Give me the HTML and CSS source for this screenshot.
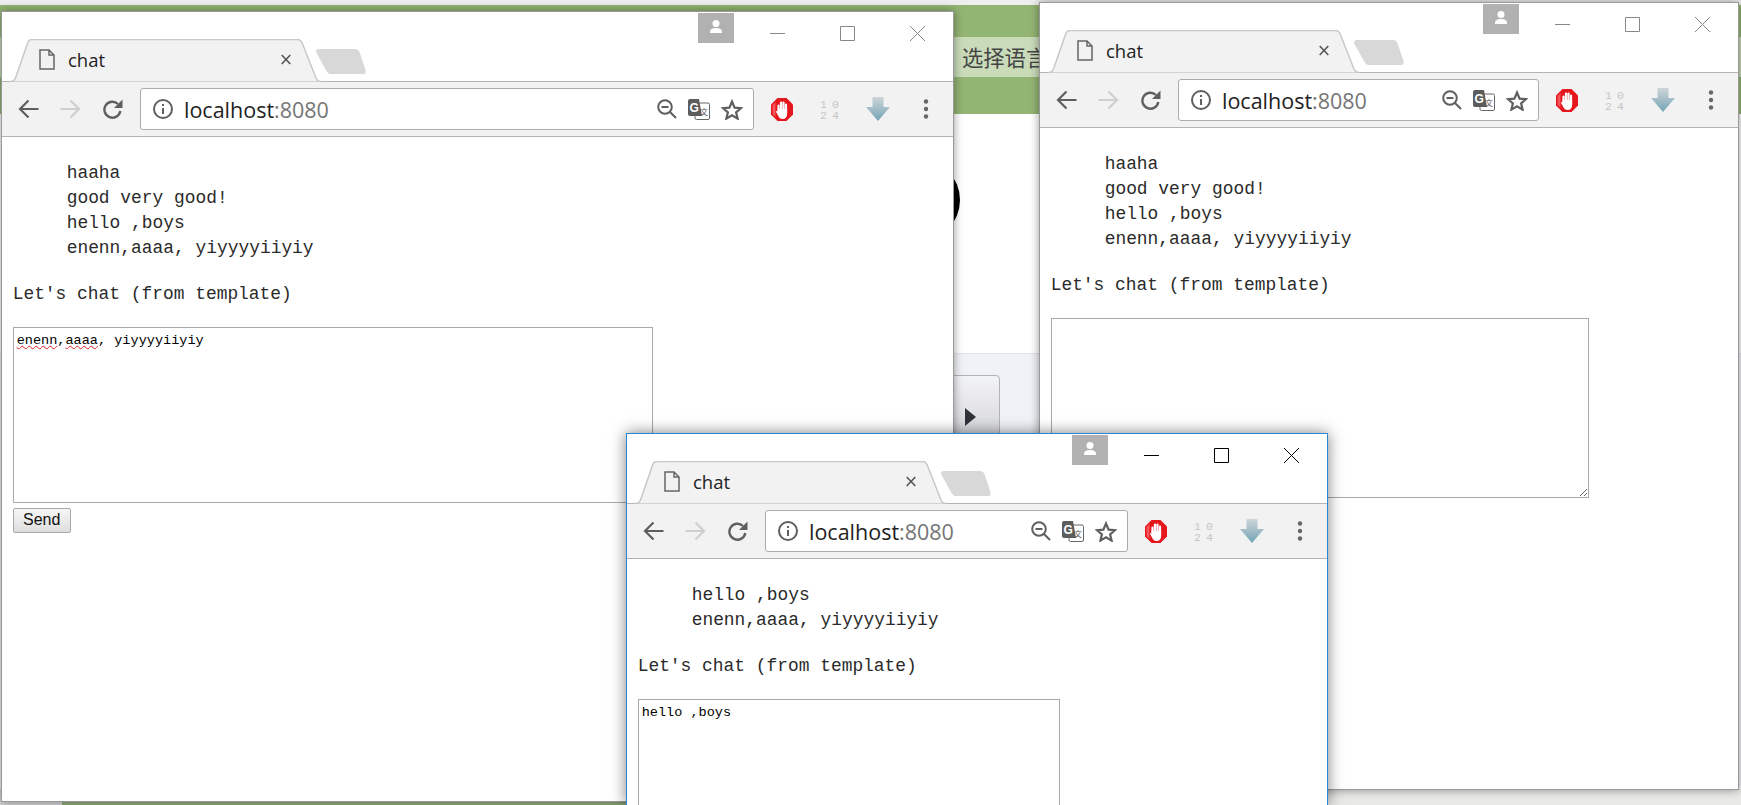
FILE: index.html
```html
<!DOCTYPE html>
<html lang="en">
<head>
  <meta charset="UTF-8" />
  <meta name="viewport" content="width=device-width, initial-scale=1.0" />
  <title>chat</title>
  <link rel="stylesheet" href="styles.css">
</head>
<body>
  <svg class="sprite" aria-hidden="true">
    <defs>
      <linearGradient id="dl-fill" x1="0" y1="0" x2="0" y2="1"><stop offset="0" stop-color="#ced5d8"/><stop offset="1" stop-color="#74a5b6"/></linearGradient>
    </defs>
    <symbol id="i-doc" viewBox="0 0 16 21"><path d="M1 1h9l5 5v14H1z M10 1v5h5" fill="none" stroke="currentColor" stroke-width="1.5"/></symbol>
    <symbol id="i-x" viewBox="0 0 10 11"><path d="M.7 1l8.6 9M9.3 1L.7 10" fill="none" stroke="currentColor" stroke-width="1.6"/></symbol>
    <symbol id="i-newtab" viewBox="0 0 50 25"><path d="M3 0h36q3 0 4.500 3l6 18q1 4-3 4H14q-2 0-3.500-3L.5 4Q-1 0 3 0z" fill="#d8d8d8"/></symbol>
    <symbol id="i-back" viewBox="0 0 21 20"><path d="M20.500 10H2M10.500 1.500L2 10l8.500 8.500" fill="none" stroke="currentColor" stroke-width="2.200"/></symbol>
    <symbol id="i-fwd" viewBox="0 0 21 20"><path d="M.5 10H19M10.500 1.500L19 10l-8.500 8.500" fill="none" stroke="currentColor" stroke-width="2.200"/></symbol>
    <symbol id="i-reload" viewBox="0 0 21 20"><path d="M16 5A8 8 0 1 0 18.300 12" fill="none" stroke="currentColor" stroke-width="2.400"/><path d="M20.500 .5V9h-8.500z" fill="currentColor"/></symbol>
    <symbol id="i-info" viewBox="0 0 20 20"><circle cx="10" cy="10" r="9" fill="none" stroke="currentColor" stroke-width="2"/><path d="M9 9h2v6H9zM9 5h2v2H9z" fill="currentColor"/></symbol>
    <symbol id="i-zoom" viewBox="0 0 20 20"><circle cx="8" cy="8" r="6.800" fill="none" stroke="currentColor" stroke-width="2"/><path d="M4.500 8h7M13 13l6 6" fill="none" stroke="currentColor" stroke-width="2"/></symbol>
    <symbol id="i-translate" viewBox="0 0 22 21">
      <rect x="7" y="4" width="14.500" height="16.500" rx="1.500" fill="#fff" stroke="#666"/>
      <path d="M2 0h9l3 17H2a2 2 0 0 1-2-2V2a2 2 0 0 1 2-2z" fill="#5c5c5c"/>
    </symbol>
    <symbol id="i-star" viewBox="0 0 22 21"><path d="M11 2.500l2.600 6.100 6.400.5-4.900 4.200 1.500 6.300L11 16.300l-5.600 3.300 1.500-6.300L2 9.100l6.400-.5z" fill="none" stroke="currentColor" stroke-width="2.200"/></symbol>
    <symbol id="i-adblock" viewBox="0 0 22 23">
      <path d="M6.500 0h9L22 6.500v10L15.500 23h-9L0 16.500v-10z" fill="#e5161c"/>
      <path d="M1.500 7v9l3 3V4z" fill="#f2555a"/>
      <path d="M7.500 13V7.500M10 12V4.500M12.500 12V4.500M15 13V6.500" stroke="#fff" stroke-width="2.200" stroke-linecap="round"/>
      <path d="M6.400 11h9.800v4q0 6-4.700 6-3 0-4.200-3L4.800 13.500q.8-1 2 .2z" fill="#fff"/>
    </symbol>
    <symbol id="i-download" viewBox="0 0 24 24"><path d="M6.500 0h11v10H24L12 24 0 10h6.500z" fill="url(#dl-fill)"/></symbol>
    <symbol id="i-dots" viewBox="0 0 6 20"><circle cx="3" cy="2.500" r="2.200"/><circle cx="3" cy="10" r="2.200"/><circle cx="3" cy="17.500" r="2.200"/></symbol>
    <symbol id="i-user" viewBox="0 0 36 30"><circle cx="18" cy="10.500" r="3.500" fill="#fff"/><path d="M12 19q0-4 6-4t6 4v1H12z" fill="#fff"/></symbol>
    <symbol id="i-min" viewBox="0 0 15 15"><path d="M0 7.500h15" stroke="currentColor" fill="none"/></symbol>
    <symbol id="i-max" viewBox="0 0 15 15"><path d="M.5.5h14v14H.5z" stroke="currentColor" fill="none"/></symbol>
    <symbol id="i-close" viewBox="0 0 15 15"><path d="M0 0l15 15M15 0L0 15" stroke="currentColor" fill="none"/></symbol>
    <symbol id="i-tab" viewBox="0 0 311 43" preserveAspectRatio="none"><path d="M0 42.500h1q3 0 4.500-3.500L18 3q1-2.500 4-2.500h266q2.500 0 4 3L306 39q1.500 3.500 5 3.500" fill="#f2f2f2" stroke="#c8c8c8" stroke-width="1.500"/></symbol>
  </svg>

  <div class="desktop">
    <!-- the page behind the chat windows -->
    <div class="backdrop">
      <div class="bd-strip"></div>
      <div class="bd-header"><div class="bd-lang">选择语言</div></div>
      <div class="bd-main"><div class="bd-circle"></div></div>
      <div class="bd-panel">
        <div class="bd-button"><span class="bd-play"></span></div>
      </div>
      <div class="bd-footer">
        <div class="bd-foot-left"></div>
        <div class="bd-foot-mid"></div>
        <div class="bd-foot-right"></div>
      </div>
    </div>

    <!-- window A -->
    <section class="window window-a">
      <header class="tabstrip">
        <div class="tab">
          <svg class="tab-shape"><use href="#i-tab"/></svg>
          <svg class="tab-doc"><use href="#i-doc"/></svg>
          <span class="tab-title">chat</span>
          <svg class="tab-close"><use href="#i-x"/></svg>
        </div>
        <svg class="newtab"><use href="#i-newtab"/></svg>
        <div class="caption">
          <svg class="avatar"><use href="#i-user"/></svg>
          <span class="cap-btn"><svg><use href="#i-min"/></svg></span>
          <span class="cap-btn"><svg><use href="#i-max"/></svg></span>
          <span class="cap-btn cap-close"><svg><use href="#i-close"/></svg></span>
        </div>
      </header>
      <nav class="toolbar">
        <span class="nav-btn"><svg class="nav-icon"><use href="#i-back"/></svg></span>
        <span class="nav-btn is-off"><svg class="nav-icon"><use href="#i-fwd"/></svg></span>
        <span class="nav-btn"><svg class="nav-icon"><use href="#i-reload"/></svg></span>
        <div class="omnibox">
          <svg class="omni-info"><use href="#i-info"/></svg>
          <span class="omni-url">localhost<span class="omni-port">:8080</span></span>
          <div class="omni-actions">
            <svg class="ic-zoom"><use href="#i-zoom"/></svg>
            <svg class="ic-tr" viewBox="0 0 22 21"><use href="#i-translate" width="22" height="21"/><text x="1.500" y="12.500" class="icon-g">G</text><text x="12" y="16" class="icon-wen">文</text></svg>
            <svg class="ic-star"><use href="#i-star"/></svg>
          </div>
        </div>
        <span class="ext"><svg class="ext-ab"><use href="#i-adblock"/></svg></span>
        <span class="ext"><svg class="ext-num" viewBox="0 0 20 20"><text x="0" y="8.500" class="icon-num">10</text><text x="0" y="19.500" class="icon-num">24</text></svg></span>
        <span class="ext"><svg class="ext-dl"><use href="#i-download"/></svg></span>
        <span class="ext"><svg class="ext-dots"><use href="#i-dots"/></svg></span>
      </nav>
      <main class="content">
        <div class="inbox">
          <div>haaha</div>
          <div>good very good!</div>
          <div>hello ,boys</div>
          <div>enenn,aaaa, yiyyyyiiyiy</div>
        </div>
        <p class="intro">Let's chat (from template)</p>
        <div class="msg msg-a"><span class="typo">enenn</span>,<span class="typo">aaaa</span>, yiyyyyiiyiy</div>
        <button class="send">Send</button>
      </main>
    </section>

    <!-- window B -->
    <section class="window window-b">
      <header class="tabstrip">
        <div class="tab">
          <svg class="tab-shape"><use href="#i-tab"/></svg>
          <svg class="tab-doc"><use href="#i-doc"/></svg>
          <span class="tab-title">chat</span>
          <svg class="tab-close"><use href="#i-x"/></svg>
        </div>
        <svg class="newtab"><use href="#i-newtab"/></svg>
        <div class="caption">
          <svg class="avatar"><use href="#i-user"/></svg>
          <span class="cap-btn"><svg><use href="#i-min"/></svg></span>
          <span class="cap-btn"><svg><use href="#i-max"/></svg></span>
          <span class="cap-btn cap-close"><svg><use href="#i-close"/></svg></span>
        </div>
      </header>
      <nav class="toolbar">
        <span class="nav-btn"><svg class="nav-icon"><use href="#i-back"/></svg></span>
        <span class="nav-btn is-off"><svg class="nav-icon"><use href="#i-fwd"/></svg></span>
        <span class="nav-btn"><svg class="nav-icon"><use href="#i-reload"/></svg></span>
        <div class="omnibox">
          <svg class="omni-info"><use href="#i-info"/></svg>
          <span class="omni-url">localhost<span class="omni-port">:8080</span></span>
          <div class="omni-actions">
            <svg class="ic-zoom"><use href="#i-zoom"/></svg>
            <svg class="ic-tr" viewBox="0 0 22 21"><use href="#i-translate" width="22" height="21"/><text x="1.500" y="12.500" class="icon-g">G</text><text x="12" y="16" class="icon-wen">文</text></svg>
            <svg class="ic-star"><use href="#i-star"/></svg>
          </div>
        </div>
        <span class="ext"><svg class="ext-ab"><use href="#i-adblock"/></svg></span>
        <span class="ext"><svg class="ext-num" viewBox="0 0 20 20"><text x="0" y="8.500" class="icon-num">10</text><text x="0" y="19.500" class="icon-num">24</text></svg></span>
        <span class="ext"><svg class="ext-dl"><use href="#i-download"/></svg></span>
        <span class="ext"><svg class="ext-dots"><use href="#i-dots"/></svg></span>
      </nav>
      <main class="content">
        <div class="inbox">
          <div>haaha</div>
          <div>good very good!</div>
          <div>hello ,boys</div>
          <div>enenn,aaaa, yiyyyyiiyiy</div>
        </div>
        <p class="intro">Let's chat (from template)</p>
        <textarea class="msg msg-b"></textarea>
      </main>
    </section>

    <!-- window C, the focused one -->
    <section class="window window-c">
      <header class="tabstrip">
        <div class="tab">
          <svg class="tab-shape"><use href="#i-tab"/></svg>
          <svg class="tab-doc"><use href="#i-doc"/></svg>
          <span class="tab-title">chat</span>
          <svg class="tab-close"><use href="#i-x"/></svg>
        </div>
        <svg class="newtab"><use href="#i-newtab"/></svg>
        <div class="caption">
          <svg class="avatar"><use href="#i-user"/></svg>
          <span class="cap-btn"><svg><use href="#i-min"/></svg></span>
          <span class="cap-btn"><svg><use href="#i-max"/></svg></span>
          <span class="cap-btn cap-close"><svg><use href="#i-close"/></svg></span>
        </div>
      </header>
      <nav class="toolbar">
        <span class="nav-btn"><svg class="nav-icon"><use href="#i-back"/></svg></span>
        <span class="nav-btn is-off"><svg class="nav-icon"><use href="#i-fwd"/></svg></span>
        <span class="nav-btn"><svg class="nav-icon"><use href="#i-reload"/></svg></span>
        <div class="omnibox">
          <svg class="omni-info"><use href="#i-info"/></svg>
          <span class="omni-url">localhost<span class="omni-port">:8080</span></span>
          <div class="omni-actions">
            <svg class="ic-zoom"><use href="#i-zoom"/></svg>
            <svg class="ic-tr" viewBox="0 0 22 21"><use href="#i-translate" width="22" height="21"/><text x="1.500" y="12.500" class="icon-g">G</text><text x="12" y="16" class="icon-wen">文</text></svg>
            <svg class="ic-star"><use href="#i-star"/></svg>
          </div>
        </div>
        <span class="ext"><svg class="ext-ab"><use href="#i-adblock"/></svg></span>
        <span class="ext"><svg class="ext-num" viewBox="0 0 20 20"><text x="0" y="8.500" class="icon-num">10</text><text x="0" y="19.500" class="icon-num">24</text></svg></span>
        <span class="ext"><svg class="ext-dl"><use href="#i-download"/></svg></span>
        <span class="ext"><svg class="ext-dots"><use href="#i-dots"/></svg></span>
      </nav>
      <main class="content">
        <div class="inbox">
          <div>hello ,boys</div>
          <div>enenn,aaaa, yiyyyyiiyiy</div>
        </div>
        <p class="intro">Let's chat (from template)</p>
        <div class="msg msg-c">hello ,boys</div>
      </main>
    </section>
  </div>
</body>
</html>
```

FILE: styles.css
```css
html, body {
  margin: 0;
  padding: 0;
  height: 100%;
  overflow: hidden;
  background: #fff;
}
.sprite {
  position: absolute;
  width: 0;
  height: 0;
}
.desktop {
  position: relative;
  height: 805px;
  overflow: hidden;
}

/* page behind the windows */
.backdrop {
  display: flex;
  flex-direction: column;
  height: 100%;
}
.bd-strip {
  height: 5px;
  background: #eeeeee;
}
.bd-header {
  height: 109px;
  padding-top: 32px;
  box-sizing: border-box;
  background: #93b573;
}
.bd-lang {
  height: 40px;
  padding-left: 962px;
  background: #c9dbb9;
  color: #444;
  font: 21.3px/40px "Noto Sans CJK SC", sans-serif;
}
.bd-main {
  position: relative;
  height: 239px;
  background: #fff;
}
.bd-circle {
  position: absolute;
  left: 878px;
  top: 45px;
  width: 82px;
  height: 82px;
  border-radius: 50%;
  background: #000;
}
.bd-panel {
  flex: 1;
  padding: 21px 0 0 900px;
  background: #f0f2f7;
  border-top: 1px solid #e4e4e8;
}
.bd-button {
  position: relative;
  width: 100px;
  height: 100px;
  box-sizing: border-box;
  border: 1px solid #b4b4b8;
  border-radius: 4px;
  background: linear-gradient(#f3f4f8, #c4c4c8);
}
.bd-play {
  position: absolute;
  left: 64px;
  top: 32px;
  border-left: 11px solid #30343a;
  border-top: 9px solid transparent;
  border-bottom: 9px solid transparent;
}
.bd-footer {
  display: flex;
  height: 16px;
}
.bd-foot-left {
  width: 62px;
  background: #d4d4d4;
}
.bd-foot-mid {
  width: 1265px;
  background: #93ad7b;
}
.bd-foot-right {
  flex: 1;
  background: #e9e9e5;
}

/* browser windows */
.window {
  position: absolute;
  box-sizing: border-box;
  display: flex;
  flex-direction: column;
  overflow: hidden;
  background: #fff;
  color: #888;
  border: 1px solid rgba(110, 110, 110, 0.7);
  box-shadow: 0 0 9px rgba(0, 0, 0, 0.4);
  font-family: "Open Sans", sans-serif;
}
.window-a {
  left: 1px;
  top: 11px;
  width: 953px;
  height: 791px;
}
.window-b {
  left: 1039px;
  top: 2px;
  width: 700px;
  height: 788px;
}
.window-c {
  left: 626px;
  top: 433px;
  width: 702px;
  height: 372px;
  color: #000;
  border-color: #2b86d6;
  border-bottom: 0;
  box-shadow: 0 0 14px rgba(0, 0, 0, 0.5);
}

.tabstrip {
  display: flex;
  align-items: flex-start;
  flex: none;
  box-sizing: border-box;
  height: 70px;
  padding-left: 8px;
  background: #fff;
  border-bottom: 1px solid #b4b4b4;
}
.tab {
  position: relative;
  display: flex;
  align-items: center;
  flex: none;
  box-sizing: border-box;
  width: 311px;
  height: 43px;
  margin-top: 27px;
  padding: 0 30px 2px 29px;
  color: #000;
}
.tab-shape {
  position: absolute;
  left: 0;
  top: 0;
  width: 100%;
  height: 100%;
}
.tab-doc {
  position: relative;
  width: 16px;
  height: 21px;
  color: #666;
}
.tab-title {
  position: relative;
  margin-left: 13px;
  font-size: 18.500px;
  color: #222;
}
.tab-close {
  position: relative;
  width: 10px;
  height: 11px;
  margin-left: auto;
  color: #555;
}
.newtab {
  flex: none;
  width: 50px;
  height: 25px;
  margin: 37px 0 0 -5px;
}
.caption {
  display: flex;
  align-items: flex-start;
  margin-left: auto;
  margin-right: 1px;
}
.avatar {
  width: 36px;
  height: 30px;
  margin: 1px 8px 0 0;
  background: #b1b1b1;
}
.cap-btn {
  display: flex;
  align-items: center;
  justify-content: center;
  width: 70px;
  height: 42px;
}
.cap-btn svg {
  width: 15px;
  height: 15px;
}

.toolbar {
  display: flex;
  align-items: center;
  flex: none;
  box-sizing: border-box;
  height: 55px;
  padding: 0 3px 0 5px;
  background: #f2f2f2;
  border-bottom: 1px solid #b4b4b4;
}
.nav-btn {
  display: flex;
  justify-content: center;
  flex: none;
  width: 42px;
  color: #5f5f5f;
}
.nav-btn.is-off {
  color: #cfcfcf;
}
.nav-icon {
  width: 21px;
  height: 20px;
}
.omnibox {
  display: flex;
  align-items: center;
  flex: 1;
  box-sizing: border-box;
  height: 42px;
  margin: 0 4px 0 7px;
  padding: 0 10px 0 12px;
  background: #fff;
  border: 1px solid #ababab;
  border-radius: 3px;
  color: #5f5f5f;
}
.omni-info {
  flex: none;
  width: 20px;
  height: 20px;
}
.omni-url {
  margin-left: 11px;
  font-size: 21.500px;
  color: #222;
}
.omni-port {
  color: #757575;
}
.omni-actions {
  display: flex;
  align-items: center;
  gap: 11px;
  margin-left: auto;
}
.ic-zoom {
  width: 20px;
  height: 20px;
}
.ic-tr,
.ic-star {
  width: 22px;
  height: 21px;
}
.icon-g {
  font: bold 12px "Liberation Sans", sans-serif;
  fill: #fff;
}
.icon-wen {
  font: 8px "Noto Sans CJK SC", sans-serif;
  fill: #555;
}
.icon-num {
  font: 11.500px "Liberation Mono", monospace;
  letter-spacing: 5px;
  fill: #c6c6c6;
}
.ext {
  display: flex;
  justify-content: center;
  flex: none;
  width: 48px;
  color: #666;
  fill: #666;
}
.ext-ab {
  width: 22px;
  height: 23px;
}
.ext-num {
  width: 20px;
  height: 20px;
  overflow: visible;
}
.ext-dl {
  width: 24px;
  height: 24px;
}
.ext-dots {
  width: 6px;
  height: 20px;
}

/* chat page */
.content {
  flex: 1;
  padding: 24px 10.670px 0;
  color: #2a2a2a;
  font-family: "Liberation Mono", monospace;
  font-size: 17.900px;
  line-height: 25px;
}
.inbox {
  margin-left: 54px;
}
.intro {
  margin: 20.500px 0 20px;
}
.msg {
  display: block;
  box-sizing: border-box;
  margin: 0;
  padding: 3px;
  background: #fff;
  border: 1px solid #a9a9a9;
  color: #000;
  font-family: "Liberation Mono", monospace;
  font-size: 13.550px;
  line-height: 20px;
  outline: none;
}
.msg-a {
  width: 640px;
  height: 176px;
}
.msg-b {
  width: 538px;
  height: 180px;
}
.msg-c {
  width: 422px;
  height: 176px;
}
.typo {
  text-decoration: underline wavy #e02020 1px;
  text-underline-offset: 1px;
}
.send {
  display: block;
  box-sizing: border-box;
  width: 58px;
  height: 25px;
  margin-top: 5px;
  padding: 0;
  background: linear-gradient(#f6f6f6, #dedede);
  border: 1px solid #a9a9a9;
  border-radius: 2px;
  color: #111;
  font: 16px "Liberation Sans", sans-serif;
}
```
